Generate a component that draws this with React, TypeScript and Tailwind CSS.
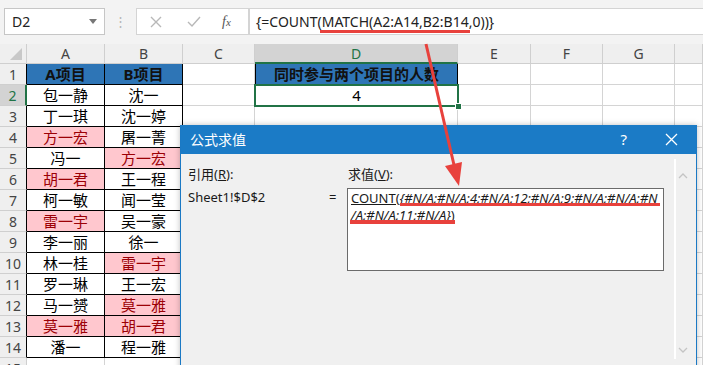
import { useState } from "react";

const ui = "font-['Noto_Sans','Noto_Sans_CJK_SC',sans-serif]";

type Row = { a: string; b: string; pa?: boolean; pb?: boolean };

const data: Row[] = [
    { a: "包一静", b: "沈一" },
    { a: "丁一琪", b: "沈一婷" },
    { a: "方一宏", b: "屠一菁", pa: true },
    { a: "冯一", b: "方一宏", pb: true },
    { a: "胡一君", b: "王一程", pa: true },
    { a: "柯一敏", b: "闻一莹" },
    { a: "雷一宇", b: "吴一豪", pa: true },
    { a: "李一丽", b: "徐一" },
    { a: "林一桂", b: "雷一宇", pb: true },
    { a: "罗一琳", b: "王一宏" },
    { a: "马一赟", b: "莫一雅", pb: true },
    { a: "莫一雅", b: "胡一君", pa: true, pb: true },
    { a: "潘一", b: "程一雅" },
]

function FormulaBar() {
    return (
        <div className="h-[44px] bg-[#f3f3f3] flex flex-row items-start pt-[8px] pl-[4px]">
            <div className="w-[101px] h-[27px] bg-white border border-[#c6c6c6] flex flex-row items-center justify-between px-[7px] text-[14px] text-[#222]">
                <span>D2</span>
                <svg width="8" height="5" viewBox="0 0 8 5"><path d="M0 0h8L4 5z" fill="#777" /></svg>
            </div>
            <div className="w-[31px] h-[27px] flex items-center justify-center text-[#b5b5b5] text-[13px]">⋮</div>
            <div className="w-[113px] h-[27px] bg-white border border-[#d4d4d4] flex flex-row items-center text-[#b3b3b3]">
                <svg className="ml-[13px]" width="12" height="12" viewBox="0 0 12 12"><path d="M1 1l10 10M11 1L1 11" stroke="#b8b8b8" strokeWidth="1.4" /></svg>
                <svg className="ml-[25px]" width="14" height="12" viewBox="0 0 14 12"><path d="M1 6l4 4 8-9" stroke="#b8b8b8" strokeWidth="1.4" fill="none" /></svg>
                <span className="ml-[21px] italic text-[#555] text-[14px] font-['Liberation_Serif',serif]">f<span className="text-[11px]">x</span></span>
            </div>
            <div className="flex-1 h-[27px] bg-white border border-[#d4d4d4] border-r-0 flex items-center pl-[6px] text-[14px] text-[#222]">
                {"{=COUNT(MATCH(A2:A14,B2:B14,0))}"}
            </div>
        </div>
    )
}

function Sheet() {
    const headers = ["A", "B", "C", "D", "E", "F", "G", ""]
    const gray = "border-r border-b border-[#d4d4d4]"

    return (
        <div className="grid grid-cols-[27px_78px_78px_72px_203px_73px_72px_72px_1fr] grid-rows-[20px_repeat(15,21px)] bg-white text-[15px]">
            {/* column headers */}
            <div className="bg-[#efefef] border-r border-b border-[#cfcfcf] relative">
                <svg className="absolute right-[4px] bottom-[3px]" width="12" height="12" viewBox="0 0 12 12"><path d="M12 0v12H0z" fill="#c8c8c8" /></svg>
            </div>
            {headers.map((h) => h == "D" ? (
                <div key={h} className="bg-[#d3d3d3] border-r border-[#cfcfcf] border-b-2 border-b-[#217346] flex items-center justify-center text-[14px] text-[#217346]">{h}</div>
            ) : (
                <div key={h || "x"} className="bg-[#efefef] border-r border-b border-[#cfcfcf] flex items-center justify-center text-[14px] text-[#444]">{h}</div>
            ))}

            {/* row 1 */}
            <div className="bg-[#efefef] border-r border-r-black border-b border-b-[#cfcfcf] flex items-center justify-center text-[14px] text-[#444]">1</div>
            <div className="bg-[#2e75b6] border-r border-b border-black flex items-center justify-center font-bold text-[#111]">A项目</div>
            <div className="bg-[#2e75b6] border-r border-b border-black flex items-center justify-center font-bold text-[#111]">B项目</div>
            <div className={gray}></div>
            <div className="bg-[#2e75b6] border border-black border-t-0 flex items-center justify-center font-bold text-[#111]">同时参与两个项目的人数</div>
            <div className={gray}></div>
            <div className={gray}></div>
            <div className={gray}></div>
            <div className={gray}></div>

            {data.map((r, i) => {
                const n = i + 2
                const selected = n == 2
                return (
                    <RowCells key={n} n={n} row={r} selected={selected} />
                )
            })}

            {/* row 15 */}
            <div className="bg-[#efefef] border-r border-b border-[#cfcfcf] flex items-center justify-center text-[14px] text-[#444]">15</div>
            <div className={gray}></div>
            <div className={gray}></div>
            <div className={gray}></div>
            <div className={gray}></div>
            <div className={gray}></div>
            <div className={gray}></div>
            <div className={gray}></div>
            <div className={gray}></div>
        </div>
    )
}

function RowCells({ n, row, selected }: { n: number, row: Row, selected: boolean }) {
    const gray = "border-r border-b border-[#d4d4d4]"
    const plain = "border-r border-b border-black flex items-center justify-center text-black"
    const pink = "bg-[#ffc7ce] border-r border-b border-black flex items-center justify-center text-[#9c0006]"

    return (
        <>
            {selected ? (
                <div className="bg-[#d3d3d3] border-r-2 border-r-[#217346] border-b border-b-[#cfcfcf] flex items-center justify-center text-[14px] text-[#217346]">{n}</div>
            ) : (
                <div className="bg-[#efefef] border-r border-r-black border-b border-b-[#cfcfcf] flex items-center justify-center text-[14px] text-[#444]">{n}</div>
            )}
            <div className={row.pa ? pink : plain}>{row.a}</div>
            <div className={row.pb ? pink : plain}>{row.b}</div>
            <div className={gray}></div>
            {selected ? (
                <div className="relative flex items-center justify-center text-black">
                    4
                    <div className="absolute -top-[1px] -left-[1px] -right-[1px] -bottom-[1px] border-2 border-[#217346]"></div>
                    <div className="absolute -right-[4px] -bottom-[4px] w-[7px] h-[7px] bg-[#217346] border border-white"></div>
                </div>
            ) : (
                <div className={gray}></div>
            )}
            <div className={gray}></div>
            <div className={gray}></div>
            <div className={gray}></div>
            <div className={gray}></div>
        </>
    )
}

function EvaluateDialog() {
    return (
        <div className={`absolute left-[180px] top-[125px] w-[517px] h-[250px] bg-[#f0f0f0] border-x border-[#1b79c4] shadow-[0_0_6px_rgba(0,0,0,0.25)] ${ui}`}>
            <div className="h-[29px] bg-[#1b7bc6] flex flex-row items-center text-white">
                <span className="ml-[9px] text-[14px]">公式求值</span>
                <span className="ml-auto mr-[38px] text-[15px]">?</span>
                <svg className="mr-[18px]" width="13" height="13" viewBox="0 0 13 13"><path d="M1 1l11 11M12 1L1 12" stroke="white" strokeWidth="1.3" /></svg>
            </div>
            <div className="flex flex-row pt-[11px] text-[13px] text-[#1a1a1a]">
                <div className="w-[148px] pl-[7px] flex flex-col gap-[5px]">
                    <span className="leading-[18px]">引用(<u>R</u>):</span>
                    <span className="leading-[18px]">Sheet1!$D$2</span>
                </div>
                <div className="w-[18px] pt-[23px] leading-[18px]">=</div>
                <div className="flex flex-col">
                    <span className="leading-[18px] pl-[1px]">求值(<u>V</u>):</span>
                    <div className="mt-[5px] w-[317px] h-[83px] bg-white border border-[#6b6b6b] px-[3px] pt-[1px] leading-[17px] whitespace-nowrap overflow-hidden">
                        <div><u>COUNT(</u><u className="italic">{"{#N/A;#N/A;4;#N/A;12;#N/A;9;#N/A;#N/A;#N"}</u></div>
                        <div><u className="italic">{"/A;#N/A;11;#N/A}"}</u><u>)</u></div>
                    </div>
                </div>
                <div className="ml-[10px] mt-[-6px] w-[16px] h-[200px] border-l-2 border-white flex flex-col items-center justify-between pt-[14px] pb-[6px]">
                    <svg width="10" height="6" viewBox="0 0 10 6"><path d="M1 5l4-4 4 4" stroke="#c4c4c4" strokeWidth="1.3" fill="none" /></svg>
                    <svg width="10" height="6" viewBox="0 0 10 6"><path d="M1 1l4 4 4-4" stroke="#c4c4c4" strokeWidth="1.3" fill="none" /></svg>
                </div>
            </div>
        </div>
    )
}

function Marks() {
    return (
        <svg className="absolute left-0 top-0 pointer-events-none" width="703" height="365" viewBox="0 0 703 365">
            <rect x="320" y="30" width="150" height="3" fill="#e8413c" />
            <line x1="426" y1="44" x2="454" y2="165" stroke="#e8413c" strokeWidth="3" />
            <polygon points="459,186 445,166 462,162" fill="#e8413c" />
            <rect x="400" y="203" width="260" height="3" fill="#e8413c" />
            <rect x="350" y="220" width="105" height="4" fill="#e8413c" />
        </svg>
    )
}

export default function App() {
    const [showMarks] = useState(true)
    return (
        <div className={`relative w-[703px] h-[365px] overflow-hidden bg-white ${ui}`}>
            <FormulaBar />
            <Sheet />
            <EvaluateDialog />
            {showMarks && <Marks />}
        </div>
    )
}
